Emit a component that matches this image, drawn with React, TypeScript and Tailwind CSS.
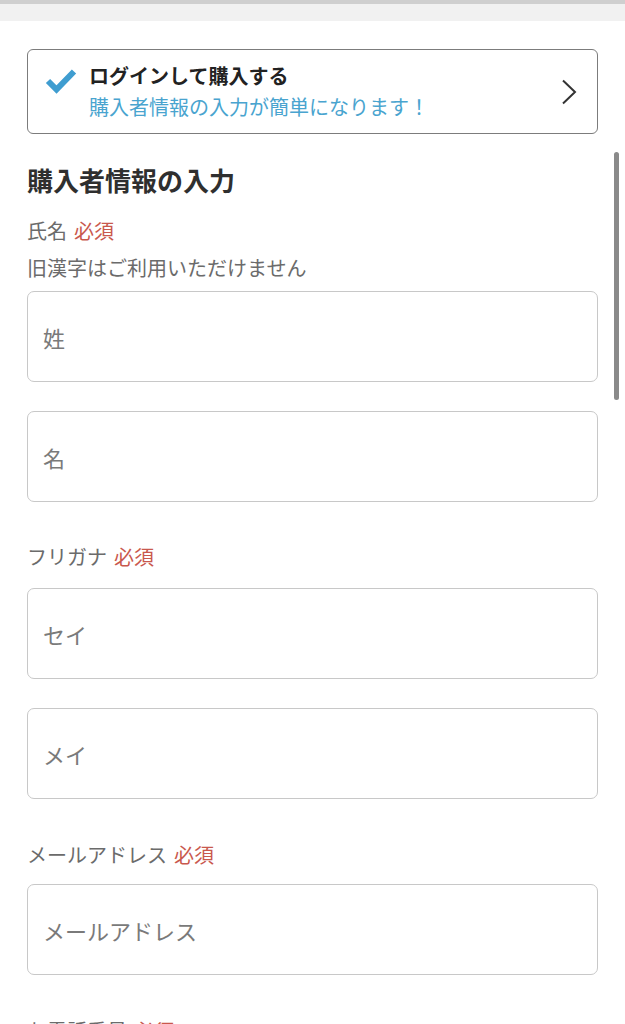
import React from 'react'

const font = { fontFamily: '"Noto Sans CJK JP", "Noto Sans", sans-serif' }

function Label({ text, className = '' }: { text: string; className?: string }) {
  return (
    <div className={`flex items-center text-[20px] leading-[28px] text-[#6b6b6b] ${className}`}>
      <span>{text}</span>
      <span className="ml-[7px] text-[#c9584d]">必須</span>
    </div>
  )
}

function Field({ placeholder, className = '' }: { placeholder: string; className?: string }) {
  return (
    <input
      type="text"
      placeholder={placeholder}
      className={`block h-[91px] w-full rounded-[7px] border-[1.5px] border-[#c8c8c8] bg-white px-[15px] text-[22px] text-[#333] outline-none placeholder:text-[#7a7a7a] ${className}`}
    />
  )
}

export default function App() {
  return (
    <div className="relative min-h-[1024px] w-full overflow-hidden bg-white" style={font}>
      {/* top browser strip */}
      <div className="h-[4px] bg-[#cfcfcf]" />
      <div className="h-[17px] bg-[#f1f1f1]" />

      <div className="px-[27px] pt-[28px]">
        {/* login banner */}
        <div className="flex h-[85px] items-center rounded-[6px] border-[1.5px] border-[#7c7c7c] pl-[17px] pr-[20px]">
          <svg width="32" height="25" viewBox="0 0 32 25" className="mb-[20px] shrink-0">
            <path d="M3 12 L11.5 20.5 L29 2.5" fill="none" stroke="#3f9dd0" strokeWidth="6" strokeLinejoin="miter" />
          </svg>
          <div className="ml-[12px] flex flex-1 flex-col gap-[5px]">
            <div className="text-[20px] font-bold leading-[26px] text-[#222]">ログインして購入する</div>
            <div className="text-[20px] leading-[26px] text-[#49a4cf]">購入者情報の入力が簡単になります！</div>
          </div>
          <svg width="16" height="26" viewBox="0 0 16 26" className="shrink-0">
            <path d="M2 1.5 L14 13 L2 24.5" fill="none" stroke="#333" strokeWidth="2" />
          </svg>
        </div>

        <h1 className="mt-[28px] text-[26px] font-bold leading-[36px] text-[#2f2f2f]">購入者情報の入力</h1>

        <Label text="氏名" className="mt-[19px]" />
        <div className="mt-[9px] text-[20px] leading-[28px] text-[#6b6b6b]">旧漢字はご利用いただけません</div>
        <Field placeholder="姓" className="mt-[9px]" />
        <Field placeholder="名" className="mt-[29px]" />

        <Label text="フリガナ" className="mt-[41px]" />
        <Field placeholder="セイ" className="mt-[17px]" />
        <Field placeholder="メイ" className="mt-[29px]" />

        <Label text="メールアドレス" className="mt-[42px]" />
        <Field placeholder="メールアドレス" className="mt-[15px]" />

        <Label text="お電話番号" className="mt-[42px]" />
      </div>

      {/* scroll indicator */}
      <div className="absolute left-[614px] top-[152px] h-[248px] w-[5px] rounded-full bg-[#8a8a8a]" />
    </div>
  )
}
